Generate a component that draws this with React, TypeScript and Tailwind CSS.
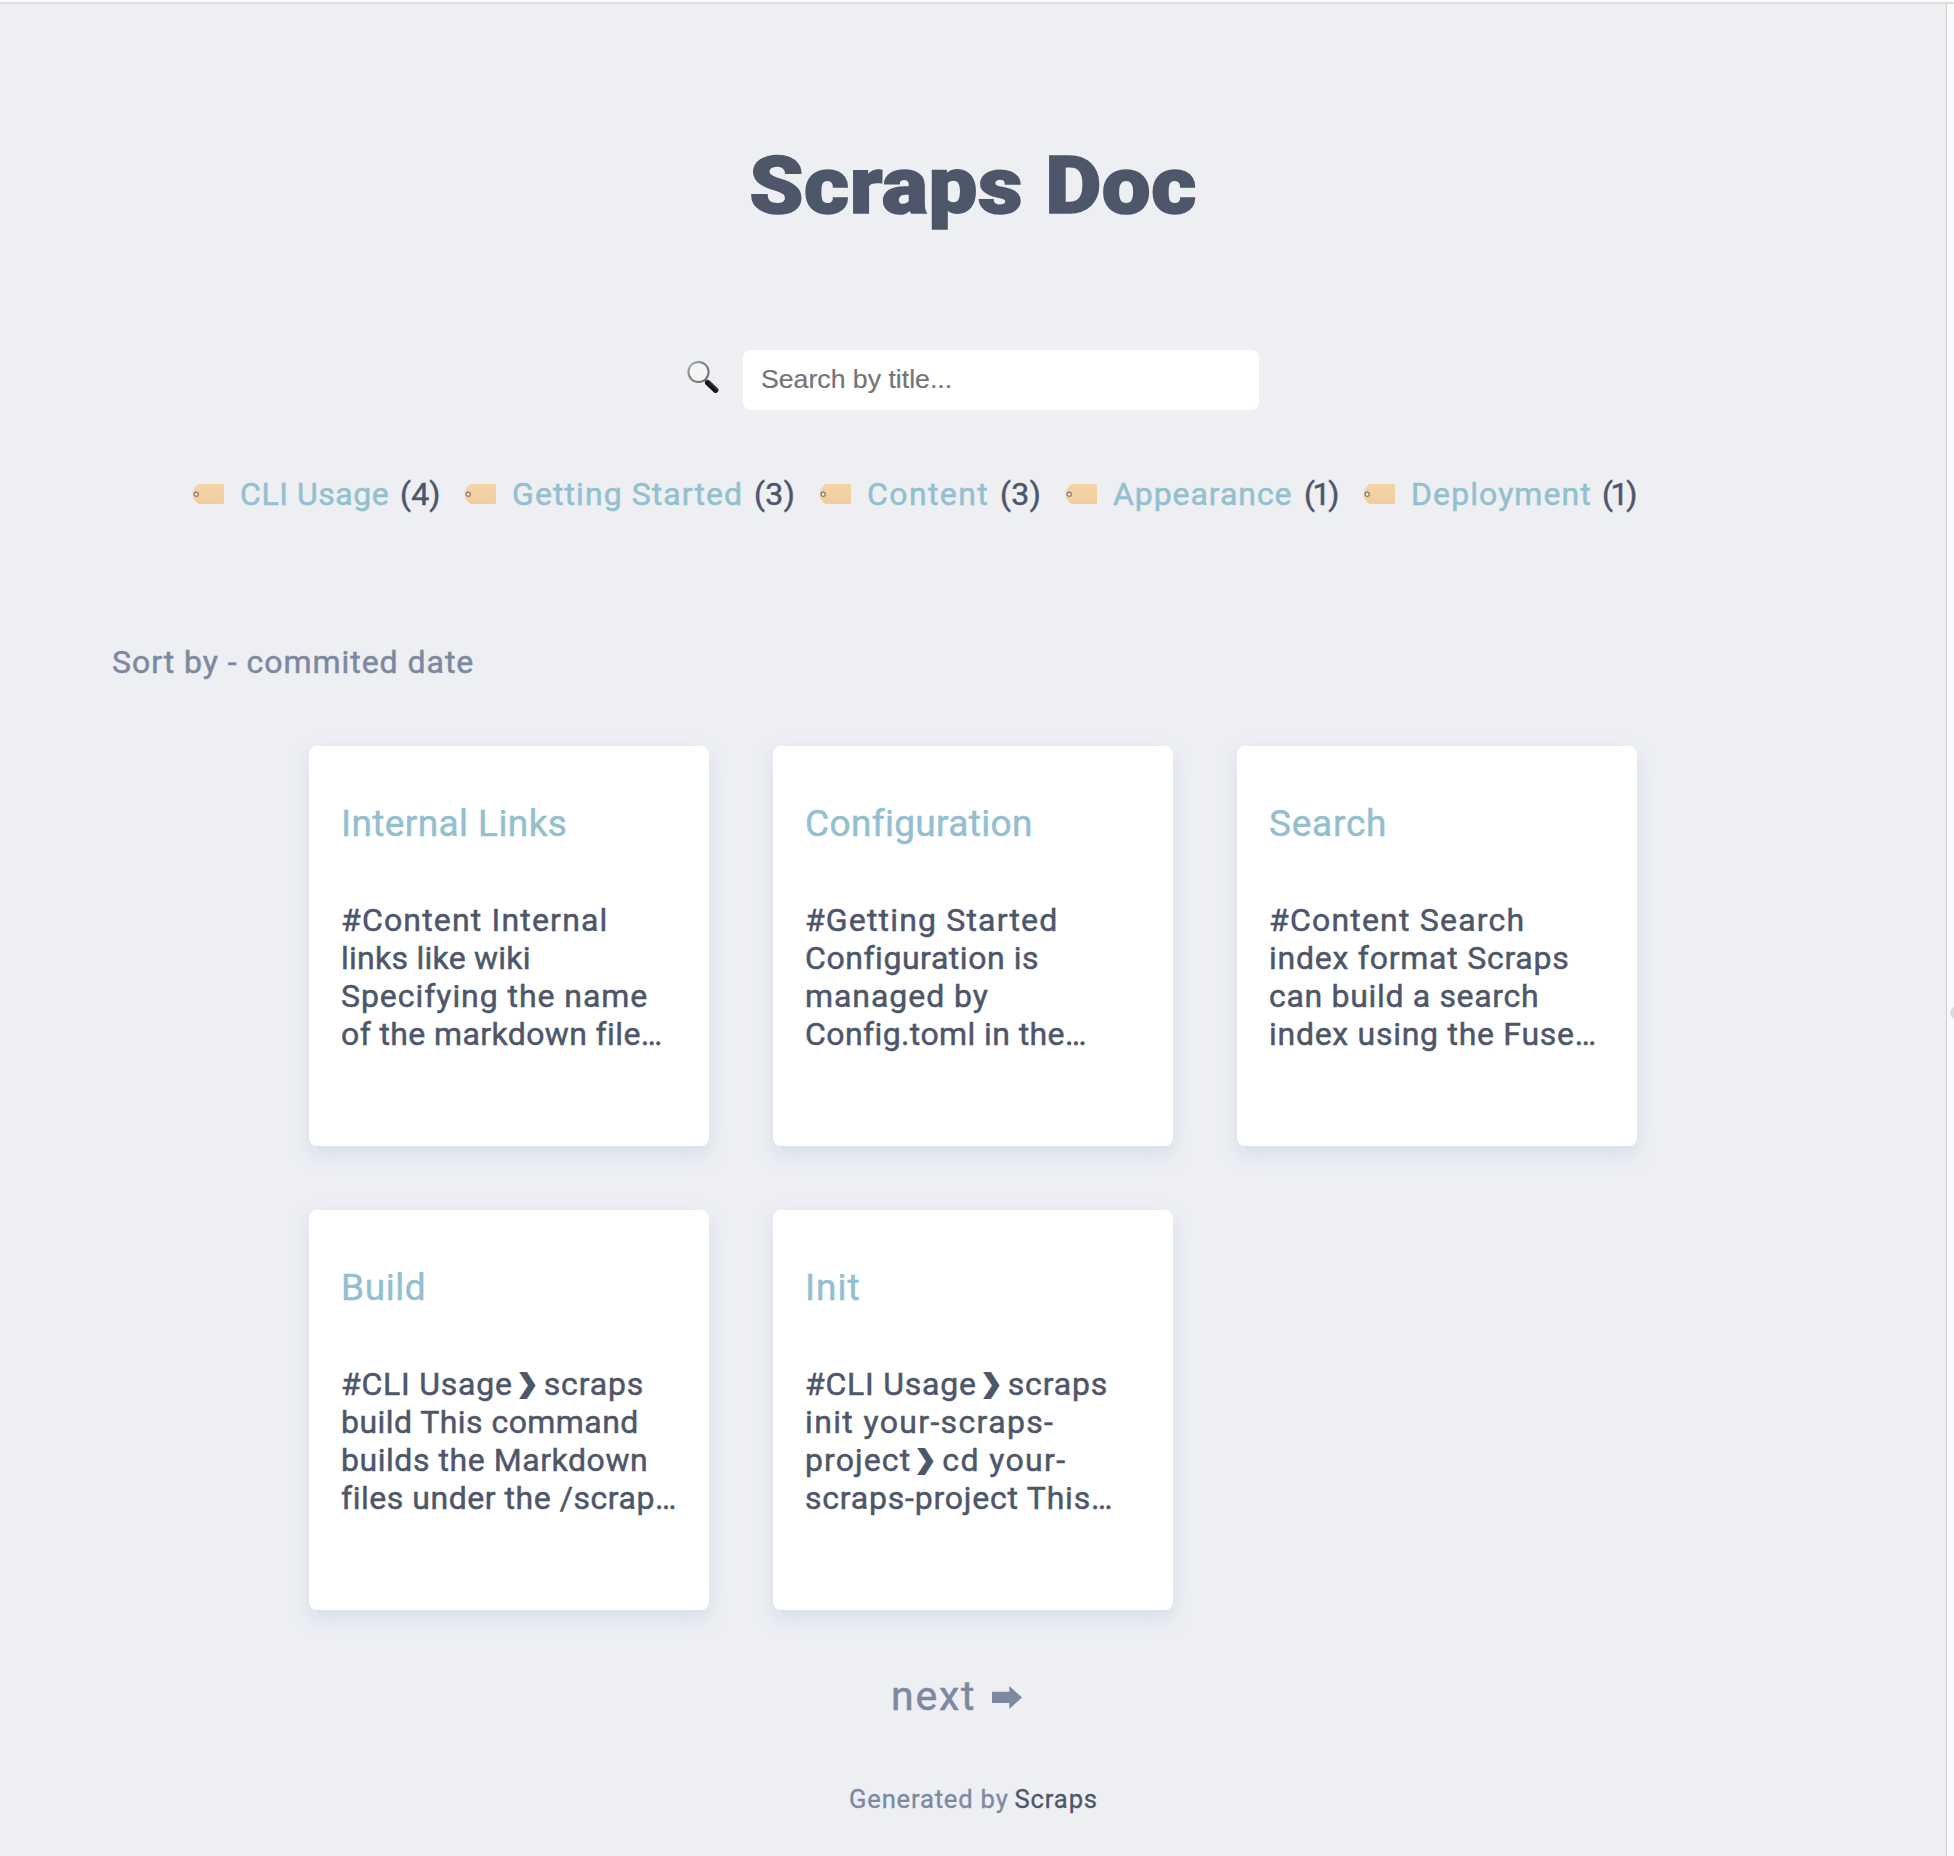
type Tag = { name: string; count: number; item: string; label: string; value: string };

const tags: Tag[] = [
  { name: "CLI Usage", count: 4, item: "w-[272px]", label: "w-[160px] tracking-[0.55px]", value: "tracking-[0.2px]" },
  { name: "Getting Started", count: 3, item: "w-[355px]", label: "w-[242px] tracking-[1.08px]", value: "tracking-[0.4px]" },
  { name: "Content", count: 3, item: "w-[246px]", label: "w-[133px] tracking-[1.4px]", value: "tracking-[0.4px]" },
  { name: "Appearance", count: 1, item: "w-[298px]", label: "w-[191px] tracking-[0.93px]", value: "tracking-[-2.4px]" },
  { name: "Deployment", count: 1, item: "w-[280px]", label: "w-[191px] tracking-[1.08px]", value: "tracking-[-2.4px]" },
];

type Line = { text: string; cls: string; after?: string; afterCls?: string };
type Scrap = { title: string; titleCls: string; lines: Line[] };

const scraps: Scrap[] = [
  {
    title: "Internal Links",
    titleCls: "tracking-[0.4px]",
    lines: [
      { text: "#Content Internal", cls: "tracking-[1.18px]" },
      { text: "links like wiki", cls: "tracking-[0.25px]" },
      { text: "Specifying the name", cls: "tracking-[0.95px]" },
      { text: "of the markdown file…", cls: "tracking-[0.38px]" },
    ],
  },
  {
    title: "Configuration",
    titleCls: "tracking-[0.35px]",
    lines: [
      { text: "#Getting Started", cls: "tracking-[1.17px]" },
      { text: "Configuration is", cls: "tracking-[0.55px]" },
      { text: "managed by", cls: "tracking-[0.95px]" },
      { text: "Config.toml in the…", cls: "tracking-[0.4px]" },
    ],
  },
  {
    title: "Search",
    titleCls: "tracking-[0.75px]",
    lines: [
      { text: "#Content Search", cls: "tracking-[1.2px]" },
      { text: "index format Scraps", cls: "tracking-[0.75px]" },
      { text: "can build a search", cls: "tracking-[0.68px]" },
      { text: "index using the Fuse…", cls: "tracking-[0.72px]" },
    ],
  },
  {
    title: "Build",
    titleCls: "tracking-[0.6px]",
    lines: [
      { text: "#CLI Usage", cls: "tracking-[0.77px]", after: "scraps", afterCls: "tracking-[0.85px]" },
      { text: "build This command", cls: "tracking-[0.45px]" },
      { text: "builds the Markdown", cls: "tracking-[0.55px]" },
      { text: "files under the /scrap…", cls: "tracking-[0.53px]" },
    ],
  },
  {
    title: "Init",
    titleCls: "tracking-[1px]",
    lines: [
      { text: "#CLI Usage", cls: "tracking-[0.77px]", after: "scraps", afterCls: "tracking-[0.85px]" },
      { text: "init your-scraps-", cls: "tracking-[1.35px]" },
      { text: "project", cls: "tracking-[1.1px]", after: "cd your-", afterCls: "tracking-[1.38px]" },
      { text: "scraps-project This…", cls: "tracking-[0.78px]" },
    ],
  },
];

function Magnifier() {
  return (
    <svg width="32" height="34" viewBox="0 0 32 34" className="shrink-0">
      <defs>
        <linearGradient id="handle" x1="0" y1="1" x2="1" y2="0">
          <stop offset="0" stopColor="#000" />
          <stop offset="0.55" stopColor="#1c1c1c" />
          <stop offset="1" stopColor="#777" />
        </linearGradient>
        <linearGradient id="rim" x1="0" y1="0" x2="1" y2="1">
          <stop offset="0" stopColor="#9dbfdc" />
          <stop offset="0.35" stopColor="#858585" />
          <stop offset="1" stopColor="#6a6a6a" />
        </linearGradient>
      </defs>
      <path d="M18 20l3 3" stroke="#888" strokeWidth="2.6" />
      <circle cx="11.500" cy="12" r="10.100" fill="#f4f4f5" stroke="url(#rim)" strokeWidth="2" />
      <path d="M20.800 22.600l7.900 7.500" stroke="url(#handle)" strokeWidth="5.600" strokeLinecap="round" />
    </svg>
  );
}

function TagIcon() {
  return (
    <svg width="32" height="20" viewBox="0 0 32 20" className="shrink-0">
      <defs>
        <linearGradient id="paper" x1="0" y1="0" x2="0" y2="1">
          <stop offset="0" stopColor="#f4d4a8" />
          <stop offset="1" stopColor="#efcd9d" />
        </linearGradient>
      </defs>
      <path d="M7.500 0H31Q32 0 32 1V19Q32 20 31 20H7.500Q5.600 19.800 4.200 18L1.600 14.500Q.5 12.800 .5 10T1.600 5.500L4.200 2Q5.600 .2 7.500 0Z" fill="url(#paper)" />
      <circle cx="4.200" cy="10.200" r="2.100" fill="#f1eef0" stroke="#8a6f60" strokeWidth="1.200" />
    </svg>
  );
}

function ScrapCard({ title, titleCls, lines }: Scrap) {
  return (
    <article className="h-[400px] w-[400px] rounded-lg bg-white px-8 pt-14 shadow-[0_8px_20px_rgba(130,152,190,0.2)]">
      <h3 className={`text-[37px] leading-[44px] whitespace-nowrap text-[#93bfcf] ${titleCls}`}>{title}</h3>
      <div className="mt-[55px] text-[32px] leading-[38px] whitespace-nowrap">
        {lines.map((line) => (
          <p key={line.text} className="flex h-[38px]">
            <span className={line.cls}>{line.text}</span>
            {line.after && (
              <>
                <span className="ml-[2px] flex w-[29px] justify-center pr-1 text-[25px] [-webkit-text-stroke:1.8px]">❯</span>
                <span className={line.afterCls}>{line.after}</span>
              </>
            )}
          </p>
        ))}
      </div>
    </article>
  );
}

export default function App() {
  return (
    <div className="flex h-[1856px] w-[1954px] flex-col overflow-hidden bg-[#fafafa] font-['Roboto',sans-serif]">
      <div className="h-[2px] shrink-0" />
      <div className="h-[2px] shrink-0 bg-[#dedede]" />
      <div className="flex grow">
        <main className="w-[1946px] bg-[#edeff3] pt-[134px] text-[#4e566a] [-webkit-text-stroke:0.5px]">
          <h1 className="scale-x-[1.085] text-center text-[80px] leading-[96px] font-black tracking-[0.5px] [-webkit-text-stroke:1.6px]">
            Scraps Doc
          </h1>

          <div className="mt-[116px] flex h-[60px] justify-center">
            <div className="w-14 pt-[10px]">
              <Magnifier />
            </div>
            <input
              className="w-[516px] rounded-lg bg-white pl-[18px] font-['Liberation_Sans',sans-serif] text-[26.67px] outline-none [-webkit-text-stroke:0.2px] placeholder:text-[#757575]"
              placeholder="Search by title..."
            />
          </div>

          <nav className="mt-[65px] ml-[192px] flex text-[32px] leading-[38px] whitespace-nowrap">
            {tags.map((tag) => (
              <div key={tag.name} className={`flex items-center ${tag.item}`}>
                <div className="w-12">
                  <TagIcon />
                </div>
                <a className={`text-[#93bfcf] ${tag.label}`}>{tag.name}</a>
                <span className={tag.value}>({tag.count})</span>
              </div>
            ))}
          </nav>

          <p className="mt-[130px] ml-[112px] text-[32px] leading-[38px] tracking-[0.96px] text-[#7d88a1]">
            Sort by - commited date
          </p>

          <section className="mx-auto mt-[65px] grid w-[1328px] grid-cols-3 gap-16">
            {scraps.map((scrap) => (
              <ScrapCard key={scrap.title} {...scrap} />
            ))}
          </section>

          <div className="mt-[62px] flex items-center justify-center pr-[33px] text-[41px] leading-[48px] tracking-[1.8px] text-[#7d88a1]">
            <span className="w-[101px]">next</span>
            <svg width="30" height="23" viewBox="0 0 30 23" className="mt-[3px]">
              <path d="M0 5.700H17.300V0L30 11.500L17.300 23V17H0Z" fill="currentColor" stroke="none" />
            </svg>
          </div>

          <footer className="mt-16 flex justify-center gap-[6px] pl-px text-[25.6px] leading-[30px] [-webkit-text-stroke:0.3px]">
            <span className="tracking-[0.8px] text-[#7d88a1]">Generated by</span>
            <span className="tracking-[0.85px]">Scraps</span>
          </footer>
        </main>
        <div className="w-px bg-[#cfcfd0]" />
        <div className="flex w-[7px] items-start overflow-hidden pt-[1003px] pl-[3px]">
          <div className="h-3 w-3 shrink-0 rounded-full bg-[#dcdcdc]" />
        </div>
      </div>
    </div>
  );
}
